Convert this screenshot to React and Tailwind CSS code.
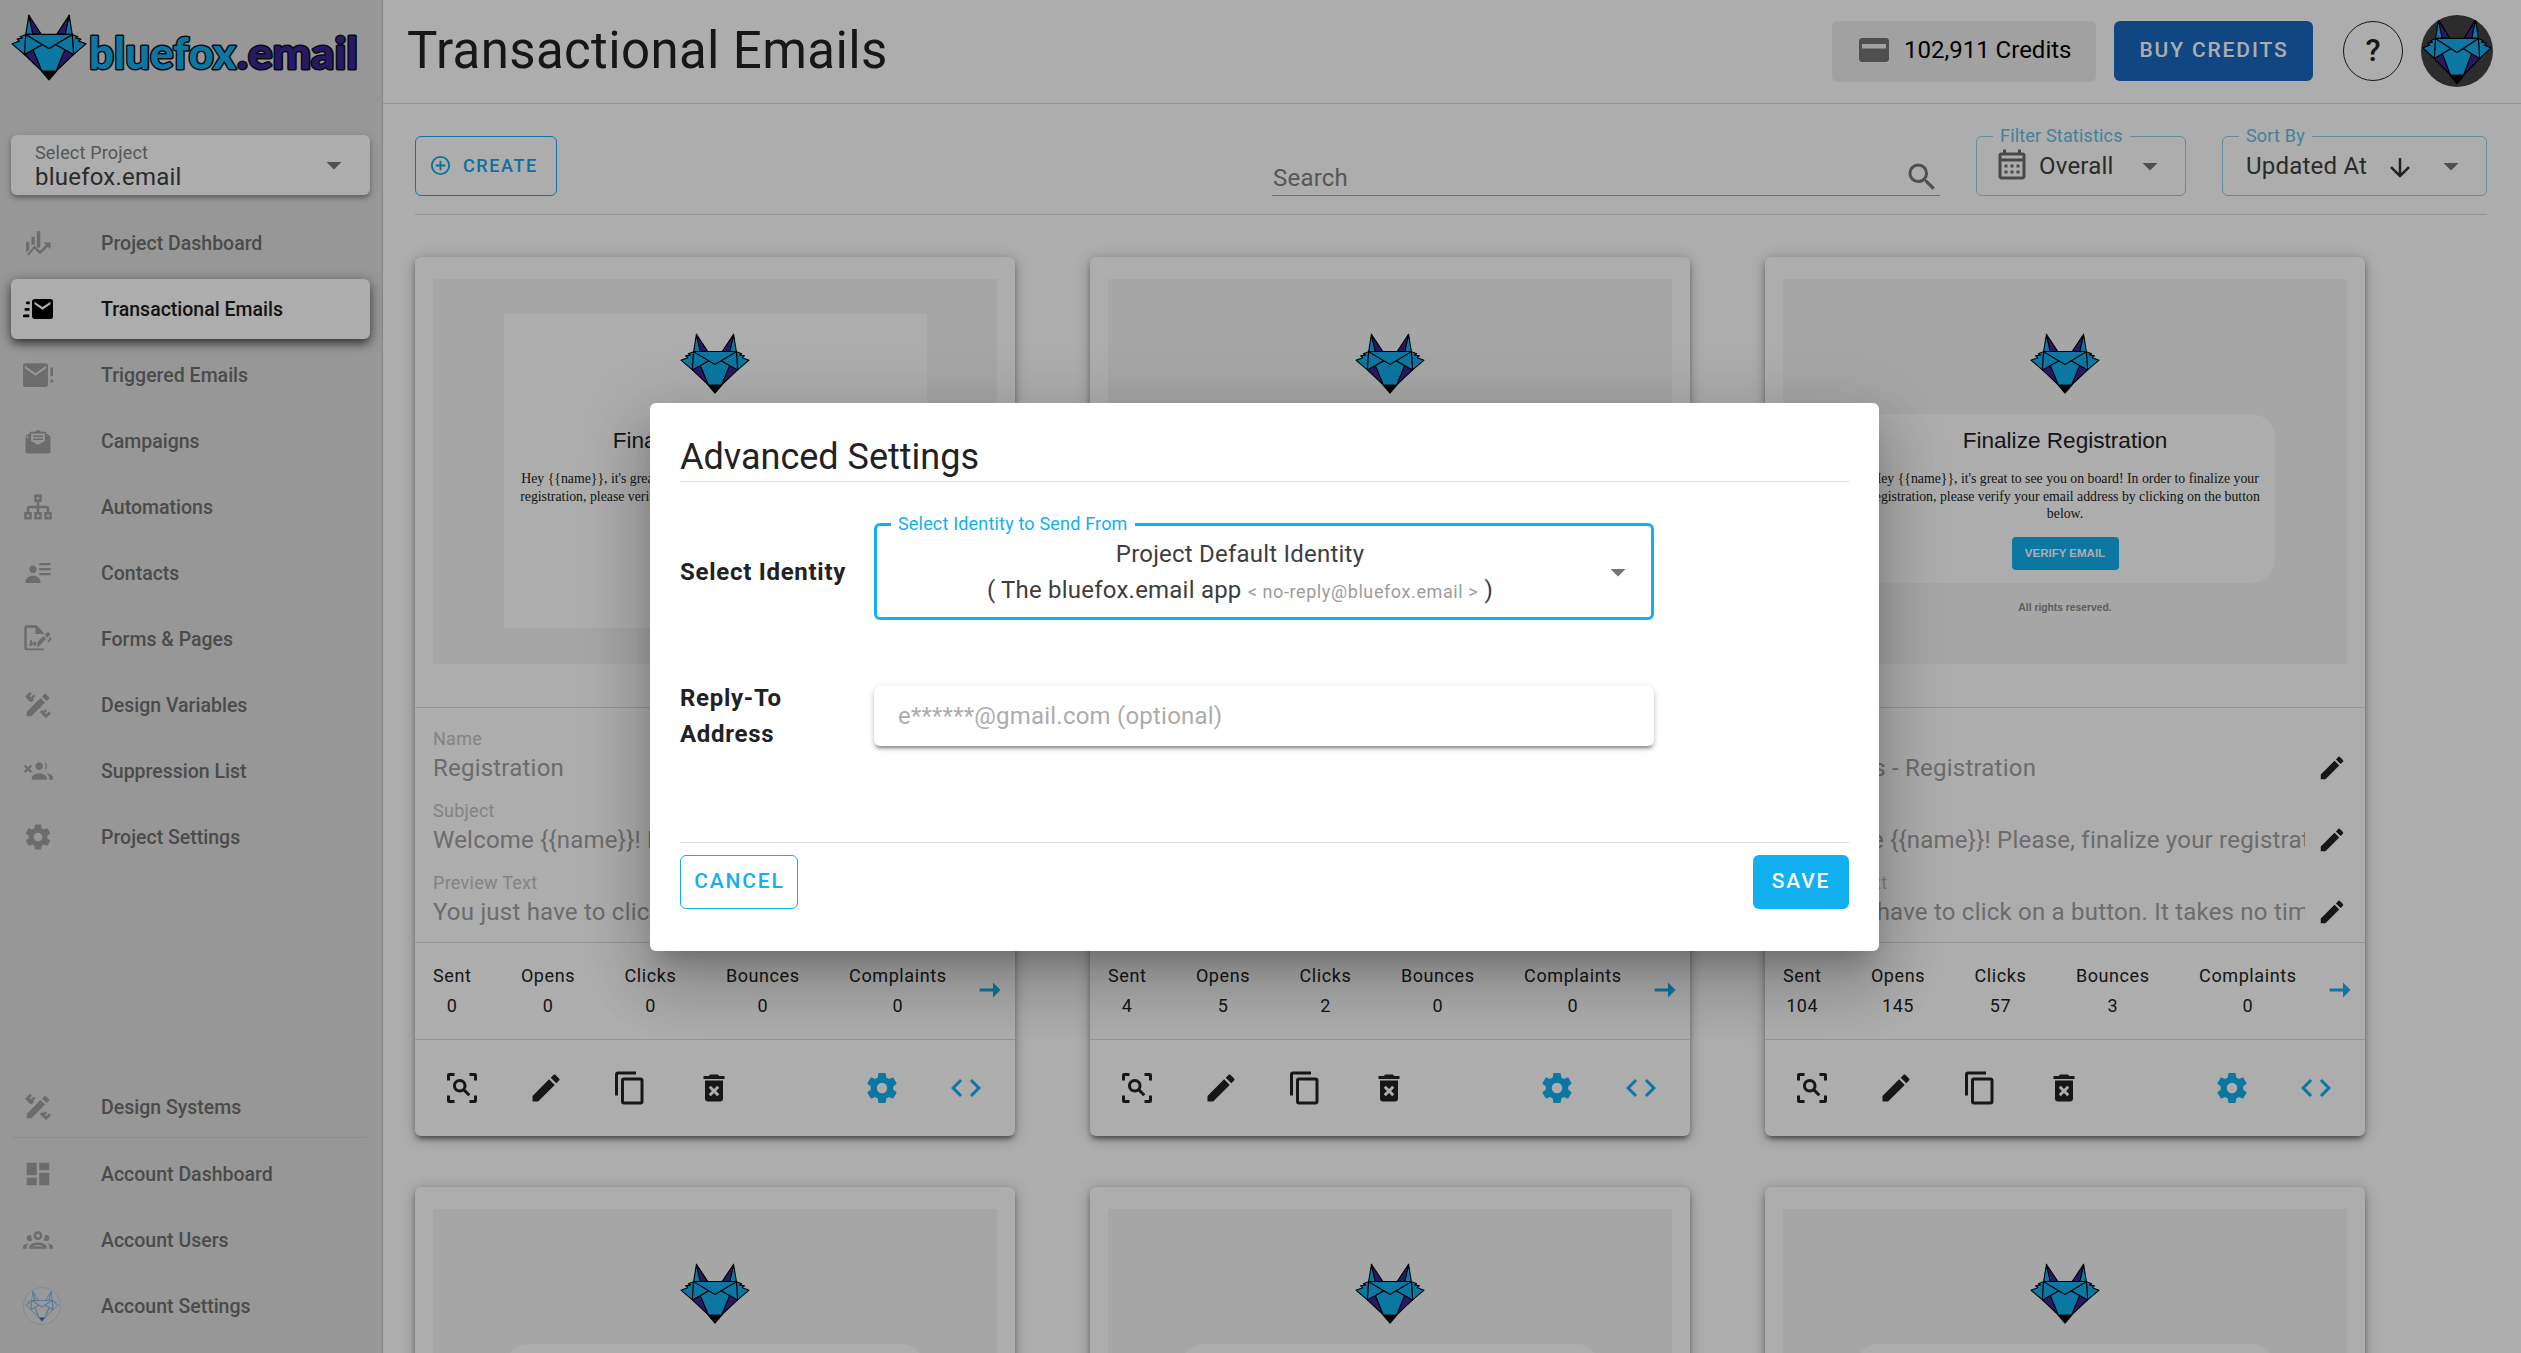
import React from "react";

const P = {
  pencil: "M20.71,7.04C21.1,6.65 21.1,6 20.71,5.63L18.37,3.29C18,2.9 17.35,2.9 16.96,3.29L15.12,5.12L18.87,8.87M3,17.25V21H6.75L17.81,9.93L14.06,6.18L3,17.25Z",
  copy: "M19,21H8V7H19M19,5H8A2,2 0 0,0 6,7V21A2,2 0 0,0 8,23H19A2,2 0 0,0 21,21V7A2,2 0 0,0 19,5M16,1H4A2,2 0 0,0 2,3V17H4V3H16V1Z",
  cog: "M12,15.5A3.5,3.5 0 0,1 8.5,12A3.5,3.5 0 0,1 12,8.5A3.5,3.5 0 0,1 15.5,12A3.5,3.5 0 0,1 12,15.5M19.43,12.97C19.47,12.65 19.5,12.33 19.5,12C19.5,11.67 19.47,11.34 19.43,11L21.54,9.37C21.73,9.22 21.78,8.95 21.66,8.73L19.66,5.27C19.54,5.05 19.27,4.96 19.05,5.05L16.56,6.05C16.04,5.66 15.5,5.32 14.87,5.07L14.5,2.42C14.46,2.18 14.25,2 14,2H10C9.75,2 9.54,2.18 9.5,2.42L9.13,5.07C8.5,5.32 7.96,5.66 7.44,6.05L4.95,5.05C4.73,4.96 4.46,5.05 4.34,5.27L2.34,8.73C2.21,8.95 2.27,9.22 2.46,9.37L4.57,11C4.53,11.34 4.5,11.67 4.5,12C4.5,12.33 4.53,12.65 4.57,12.97L2.46,14.63C2.27,14.78 2.21,15.05 2.34,15.27L4.34,18.73C4.46,18.95 4.73,19.03 4.95,18.95L7.44,17.94C7.96,18.34 8.5,18.68 9.13,18.93L9.5,21.58C9.54,21.82 9.75,22 10,22H14C14.25,22 14.46,21.82 14.5,21.58L14.87,18.93C15.5,18.67 16.04,18.34 16.56,17.94L19.05,18.95C19.27,19.03 19.54,18.95 19.66,18.73L21.66,15.27C21.78,15.05 21.73,14.78 21.54,14.63L19.43,12.97Z",
  code: "M14.6,16.6L19.2,12L14.6,7.4L16,6L22,12L16,18L14.6,16.6M9.4,16.6L4.8,12L9.4,7.4L8,6L2,12L8,18L9.4,16.6Z",
  trash: "M6,19A2,2 0 0,0 8,21H16A2,2 0 0,0 18,19V7H6V19M8.46,11.88L9.87,10.47L12,12.59L14.12,10.47L15.53,11.88L13.41,14L15.53,16.12L14.12,17.53L12,15.41L9.88,17.53L8.47,16.12L10.59,14L8.46,11.88M15.5,4L14.5,3H9.5L8.5,4H5V6H19V4H15.5Z",
  scan: "M17,22V20H20V17H22V20.5A1.5,1.5 0 0,1 20.5,22H17M7,22H3.5A1.5,1.5 0 0,1 2,20.5V17H4V20H7V22M17,2H20.5A1.5,1.5 0 0,1 22,3.5V7H20V4H17V2M7,2V4H4V7H2V3.5A1.5,1.5 0 0,1 3.5,2H7M10.5,6C13,6 15,8 15,10.5C15,11.38 14.75,12.2 14.31,12.9L17.57,16.16L16.16,17.57L12.9,14.31C12.2,14.75 11.38,15 10.5,15C8,15 6,13 6,10.5C6,8 8,6 10.5,6M10.5,8A2.5,2.5 0 0,0 8,10.5A2.5,2.5 0 0,0 10.5,13A2.5,2.5 0 0,0 13,10.5A2.5,2.5 0 0,0 10.5,8Z",
  arrowRight: "M14,16.94V12.94H5.08L5.05,10.93H14V6.94L19,11.94Z",
  arrowDown: "M11,4H13V16L18.5,10.5L19.92,11.92L12,19.84L4.08,11.92L5.5,10.5L11,16V4Z",
  grid: "M13,3V9H21V3M13,21H21V11H13M3,21H11V15H3M3,13H11V3H3V13Z",
  plus: "M12,20C7.59,20 4,16.41 4,12C4,7.59 7.59,4 12,4C16.41,4 20,7.59 20,12C20,16.41 16.41,20 12,20M12,2A10,10 0 0,0 2,12A10,10 0 0,0 12,22A10,10 0 0,0 22,12A10,10 0 0,0 12,2M13,7H11V11H7V13H11V17H13V13H17V11H13V7Z",
  search: "M9.5,3A6.5,6.5 0 0,1 16,9.5C16,11.11 15.41,12.59 14.44,13.73L14.71,14H15.5L20.5,19L19,20.5L14,15.5V14.71L13.73,14.44C12.59,15.41 11.11,16 9.5,16A6.5,6.5 0 0,1 3,9.5A6.5,6.5 0 0,1 9.5,3M9.5,5C7,5 5,7 5,9.5C5,12 7,14 9.5,14C12,14 14,12 14,9.5C14,7 12,5 9.5,5Z",
  card: "M20,4H4C2.89,4 2,4.9 2,6V18C2,19.11 2.9,20 4,20H20C21.11,20 22,19.11 22,18V6C22,4.89 21.11,4 20,4M20,11H4V8H20V11Z",
  calendar: "M7,11H9V13H7V11M21,5V19C21,20.11 20.11,21 19,21H5C3.89,21 3,20.1 3,19V5A2,2 0 0,1 5,3H6V1H8V3H16V1H18V3H19A2,2 0 0,1 21,5M5,7H19V5H5V7M19,19V9H5V19H19M15,13V11H17V13H15M11,13V11H13V13H11M7,15H9V17H7V15M15,17V15H17V17H15M11,17V15H13V17H11Z",
  caret: "M7,10L12,15L17,10H7Z",
  sitemap: "M9,2V8H11V11H5C3.89,11 3,11.89 3,13V16H1V22H7V16H5V13H11V16H9V22H15V16H13V13H19V16H17V22H23V16H21V13C21,11.89 20.11,11 19,11H13V8H15V2H9M11,4H13V6H11V4M3,18H5V20H3V18M11,18H13V20H11V18M19,18H21V20H19V18Z",
  trend: "M2.5,11H5V17.2L2.5,19.8V11M6.8,7H9.4V13.8L8,13L6.8,14.4V7M11,2.5H13.8V15L12.4,16.2L11,15V2.5M16.5,11.5H22V17L20,15L13.6,21L9,16.5L5,21.8H2.8L9,14L13.6,18.2L18.4,13.4L16.5,11.5Z",
  emailFast: "M22,4H9.5C8.3,4 7.2,4.9 7.2,6V18C7.2,19.1 8.3,20 9.5,20H22A2,2 0 0,0 24,18V6C24,4.9 23.1,4 22,4M22,8.2L15.6,12.6L9.2,8.2V6.2L15.6,10.4L22,6.2V8.2M5,16.4V18.6H1C.4,18.6 0,18.1 0,17.5S.4,16.4 1,16.4H5M3.4,6H5.4V8.2H3.4C2.8,8.2 2.4,7.7 2.4,7.1S2.8,6 3.4,6M2.2,11.2H5.2V13.4H2.2C1.6,13.4 1.2,12.9 1.2,12.3S1.6,11.2 2.2,11.2Z",
  emailAlert: "M24,6H22V13H24V6M24,15.5H22V18H24V15.5M20,4.5C20,3.4 19.1,2.5 18,2.5H2C.9,2.5 0,3.4 0,4.5V19.5C0,20.6 .9,21.5 2,21.5H18C19.1,21.5 20,20.6 20,19.5V4.5M18.5,6.5L10,12.5L1.5,6.5V4.5L10,10.5L18.5,4.5V6.5Z",
  newsletter: "M4,8L2,9V20A2,2 0 0,0 4,22H20A2,2 0 0,0 22,20V9C22,8.3 21.6,7.7 21.1,7.3L18.5,5.8V4.5H14.6L12,3L9.4,4.5H5.5V5.8L2.9,7.3C2.4,7.7 2,8.3 2,9L4,10V8M6.5,6H17.5V12L12,15L6.5,12V6M8,7.5V8.7H16V7.5H8M8,10V11.2H16V10H8Z",
  account: "M8,6A3,3 0 1,1 7.9,6M2,20V18.6C2,16.3 4.7,14.2 8,14.2S14,16.3 14,18.6V20H2M13,4H22V5.8H13V4M13,8H22V9.8H13V8M13,12H22V13.8H13V12Z",
  form: "M3,1A2,2 0 0,0 1,3V19A2,2 0 0,0 3,21H17V19.5H3V3H10V8H14.5L16.5,8.2V7L11,1H3M11.5,19L18.5,11.8L16.4,9.6L11.5,14.6V19M19.4,10.9L22,8.2L20,6.2L17.3,8.7L19.4,10.9M21,10L23,12L20.5,14.5L19.5,13.5L21,12V10M5,17.5L6,12.5L7.2,13V15.5L9.4,13.8L10.4,15V17.5H8.8L8.6,16L6.5,17.5H5Z",
  tools: "M3,21V17.3L14,6.3L17.7,10L6.7,21H3M15.2,5.1L17,3.3C17.4,2.9 18,2.9 18.4,3.3L20.7,5.6C21.1,6 21.1,6.6 20.7,7L18.9,8.8L15.2,5.1M1.6,5.4L5.6,1.4L7.1,2.9L5.3,4.7L6.4,5.8L8.6,3.6L10,5L8,7L8.8,7.8L7,9.6L5.8,9.6L1.6,5.4M13.4,17.6L15.2,15.9L16.3,17L17.9,15.4L19.2,16.8L17.6,18.4L18.6,19.4L20.9,17L22.4,18.5L18.4,22.5L13.4,17.6Z",
  usersOff: "M.7,8.2L2,7L4,9L6,7L7.3,8.2L5.3,10.2L7.3,12.2L6,13.5L4,11.5L2,13.5L.7,12.2L2.7,10.2L.7,8.2M13,5A3.1,3.1 0 1,1 12.9,5M7,19V17.5C7,15.5 10,14 13,14S19,15.5 19,17.5V19H7M17,5A3.1,3.1 0 0,1 17,11C18.5,9.5 18.5,6.5 17,5M18.5,14C21.5,14 24,15.5 24,17.5V19H21V17.5C21,16 20,14.8 18.5,14Z",
  users: "M12,5A3.5,3.5 0 0,0 8.5,8.5A3.5,3.5 0 0,0 12,12A3.5,3.5 0 0,0 15.5,8.5A3.5,3.5 0 0,0 12,5M12,7A1.5,1.5 0 0,1 13.5,8.5A1.5,1.5 0 0,1 12,10A1.5,1.5 0 0,1 10.5,8.5A1.5,1.5 0 0,1 12,7M5.5,8A2.5,2.5 0 0,0 3,10.5C3,11.44 3.53,12.25 4.29,12.68C4.65,12.88 5.06,13 5.5,13C5.94,13 6.35,12.88 6.71,12.68C7.08,12.47 7.39,12.17 7.62,11.81C6.89,10.86 6.5,9.7 6.5,8.5C6.5,8.41 6.5,8.31 6.5,8.22C6.2,8.08 5.86,8 5.5,8M18.5,8C18.14,8 17.8,8.08 17.5,8.22C17.5,8.31 17.5,8.41 17.5,8.5C17.5,9.7 17.11,10.86 16.38,11.81C16.5,12 16.63,12.15 16.78,12.3C16.94,12.45 17.1,12.58 17.29,12.68C17.65,12.88 18.06,13 18.5,13C18.94,13 19.35,12.88 19.71,12.68C20.47,12.25 21,11.44 21,10.5A2.5,2.5 0 0,0 18.5,8M12,14C9.66,14 5,15.17 5,17.5V19H19V17.5C19,15.17 14.34,14 12,14M4.71,14.55C2.78,14.78 0,15.76 0,17.5V19H3V17.07C3,16.06 3.69,15.22 4.71,14.55M19.29,14.55C20.31,15.22 21,16.06 21,17.07V19H24V17.5C24,15.76 21.22,14.78 19.29,14.55M12,16C13.53,16 15.24,16.5 16.23,17H7.77C8.76,16.5 10.47,16 12,16Z",
};

const evenOdd = ["sitemap", "newsletter", "emailFast", "emailAlert"];

function Icon({ name, className = "size-9" }) {
  return (
    <svg viewBox="0 0 24 24" className={`shrink-0 ${className}`} fill="currentColor" fillRule={evenOdd.includes(name) ? "evenodd" : "nonzero"}>
      <path d={P[name]} />
    </svg>
  );
}

function Fox({ className, line = false }) {
  const c = line ? "none" : "#12b0ef";
  const p = line ? "none" : "#3b2596";
  return (
    <svg viewBox="34 43 226 200" preserveAspectRatio="none" className={`shrink-0 ${className}`} stroke={line ? "#5aa9dd" : "#000"} strokeWidth={line ? "5" : "3.4"} strokeLinejoin="round">
      <path fill={c} d="M87 47 78 104H101Z" />
      <path fill={p} d="M87 47 99 104H124Z" />
      <path fill={c} d="M207 47 216 104H193Z" />
      <path fill={p} d="M207 47 195 104H170Z" />
      <path fill="#000" stroke="none" d="M87 46 85 62 95 62ZM207 46 209 62 199 62Z" opacity={line ? 0 : 1} />
      <path fill={p} d="M74 164 100 150 126 214ZM220 164 194 150 168 214Z" />
      <path fill={c} d="M100 150 127 134 147 146 167 134 194 150 168 214H126Z" />
      <path fill={c} d="M78 104 61 111 68 115 52 118 59 124 37 132 74 164ZM216 104 233 111 226 115 242 118 235 124 257 132 220 164Z" />
      <path fill={c} d="M78 104 127 134 74 164ZM216 104 167 134 220 164Z" />
      <path fill={c} d="M78 104H216L147 146Z" />
      <path fill={line ? "#3b3fa6" : "#000"} d="M125 214H169L147 240Z" />
    </svg>
  );
}

const top = [
  ["trend", "Project Dashboard"],
  ["emailFast", "Transactional Emails"],
  ["emailAlert", "Triggered Emails"],
  ["newsletter", "Campaigns"],
  ["sitemap", "Automations"],
  ["account", "Contacts"],
  ["form", "Forms & Pages"],
  ["tools", "Design Variables"],
  ["usersOff", "Suppression List"],
  ["cog", "Project Settings"],
];

function NavItem({ icon, label, active }) {
  return (
    <div
      className={`flex h-[60px] items-center rounded-md pl-3 text-[19.5px] font-medium ${
        active ? "bg-white text-[#1c1c1c] shadow-[0_5px_8px_-1px_rgba(0,0,0,.45),0_3px_14px_rgba(0,0,0,.4)]" : "text-[#6f6f6f]"
      }`}
    >
      {icon === "fox" ? (
        <span className="flex size-[38px] items-center justify-center rounded-full border border-[#cacad0] bg-[#e2e2e6]">
          <Fox line className="h-[31px] w-[34px] opacity-80" />
        </span>
      ) : (
        <Icon name={icon} className={active ? "size-[30px] text-black" : "size-[30px] text-[#a0a0a0]"} />
      )}
      <span className={icon === "fox" ? "ml-10 mt-px" : "ml-12 mt-px"}>{label}</span>
    </div>
  );
}

function Sidebar() {
  return (
    <aside className="flex w-[383px] shrink-0 flex-col border-r border-[#c4c4c4] bg-[#dfdfdf] pb-[17px] pl-[11px] pr-3">
      <div className="flex h-[135px] shrink-0 items-start pt-[14px]">
        <Fox className="h-[67px] w-[76px]" />
        <svg className="mt-[14px] h-[48px] w-[275px] shrink-0" viewBox="0 0 275 48" fontFamily="Lato, sans-serif" fontWeight="900" fontSize="43" stroke="#111" strokeWidth="3" paintOrder="stroke" strokeLinejoin="round">
          <text x="2" y="40.5" fill="#12b0ef" textLength="147" lengthAdjust="spacingAndGlyphs">bluefox</text>
          <text x="150" y="40.5" fill="#3b2596" textLength="121" lengthAdjust="spacingAndGlyphs">.email</text>
        </svg>
      </div>
      <div className="flex h-[60px] shrink-0 items-center justify-between rounded-md bg-white pl-6 pr-[18px] shadow-[0_3px_4px_rgba(0,0,0,.25),0_2px_8px_rgba(0,0,0,.15)]">
        <div>
          <div className="mt-[2px] h-[24px] text-[18px] leading-[24px] tracking-[.01em] text-[#808080]">Select Project</div>
          <div className="h-[26px] text-[24px] leading-[25px] tracking-[.009em] text-[#404040]">bluefox.email</div>
        </div>
        <Icon name="caret" className="mb-px size-9 text-[#7a7a7a]" />
      </div>
      <nav className="mt-[18px] flex flex-col gap-1.5">
        {top.map(([i, l]) => (
          <NavItem key={l} icon={i} label={l} active={l === "Transactional Emails"} />
        ))}
      </nav>
      <nav className="mt-auto flex flex-col gap-1.5">
        <div className="rounded-md border-b border-[#cfcfcf]">
          <NavItem icon="tools" label="Design Systems" />
        </div>
        <NavItem icon="grid" label="Account Dashboard" />
        <NavItem icon="users" label="Account Users" />
        <NavItem icon="fox" label="Account Settings" />
      </nav>
    </aside>
  );
}

function Header() {
  return (
    <header className="flex h-[104px] shrink-0 items-center border-b border-[#dcdcdc] pb-px pl-6 pr-7">
      <h1 className="mr-auto text-[51px] leading-[60px] tracking-[.0073em] text-[#222]">Transactional Emails</h1>
      <div className="mr-[18px] flex h-[61px] w-[264px] items-center rounded-md bg-[#ededed] pb-[2px] pl-6 text-black">
        <Icon name="card" className="size-9 text-[#757575]" />
        <span className="ml-3 whitespace-nowrap text-[24px]">102,911 Credits</span>
      </div>
      <div className="mr-[30px] flex h-[60px] w-[199px] items-center justify-center rounded-md bg-[#1867c0] pl-px text-[21px] font-medium tracking-[.089em] text-white">BUY CREDITS</div>
      <div className="mr-[18px] flex size-[60px] items-center justify-center rounded-full border border-[#222] text-[31px] font-medium text-[#222]">?</div>
      <div className="flex size-[72px] items-center justify-center overflow-hidden rounded-full bg-[#424242]">
        <Fox className="h-[67px] w-[70px]" />
      </div>
    </header>
  );
}

function Outlined({ label, className, children }) {
  return (
    <fieldset className={`-mt-[13px] h-[73px] rounded-md border border-[#93cfe6] ${className}`}>
      <legend className="ml-[16px] h-[26px] px-[7px] text-[18px] leading-[26px] tracking-[.01em] text-[#65bfe2]">{label}</legend>
      <div className="-mt-[10px] flex h-[54px] items-center pl-[20px] text-[24px] tracking-[.009em] text-[#404040]">{children}</div>
    </fieldset>
  );
}

function Toolbar() {
  return (
    <div className="mr-[34px] ml-8 flex h-[111px] shrink-0 items-start border-b border-[#dcdcdc] pt-8">
      <div className="mr-auto flex h-[60px] w-[142px] items-center gap-[11px] rounded-md border border-[#12b0ef] pb-[2px] pl-[13px] text-[18px] font-medium tracking-[.089em] text-[#12a9e6]">
        <Icon name="plus" className="size-[23px]" />
        CREATE
      </div>
      <div className="mr-9 flex h-[60px] w-[668px] items-end justify-between border-b border-[#a3a3a3] pl-px text-[24px] tracking-[.009em] text-[#808080]">
        <span className="leading-[34px]">Search</span>
        <Icon name="search" className="size-9 text-[#757575]" />
      </div>
      <Outlined label="Filter Statistics" className="mr-9 w-[210px]">
        <Icon name="calendar" className="-ml-[3px] size-9 text-[#6c6c6c]" />
        <span className="ml-[9px]">Overall</span>
        <Icon name="caret" className="ml-auto mr-[17px] size-9 text-[#757575]" />
      </Outlined>
      <Outlined label="Sort By" className="w-[265px]">
        <span className="ml-[3px]">Updated At</span>
        <Icon name="arrowDown" className="mt-[3px] ml-[18px] size-[30px] text-[#333]" />
        <Icon name="caret" className="ml-auto mr-[17px] size-9 text-[#757575]" />
      </Outlined>
    </div>
  );
}

function Preview({ boxed }) {
  return (
    <div className="mx-auto mt-[22px] h-[385px] w-[564px] bg-[#f5f5f5] pt-[35px]">
      <div className={`mx-auto h-[314px] w-[423px] ${boxed ? "" : "bg-white"}`}>
        <div className="flex h-[100px] justify-center pt-[19px]">
          <Fox className="h-[61px] w-[70px]" />
        </div>
        <div className={`mx-auto w-[420px] pt-[12px] text-center text-[#222] ${boxed ? "h-[169px] rounded-3xl bg-white" : ""}`}>
          <div className="font-['Liberation_Sans'] text-[22.6px] leading-[30px]">Finalize Registration</div>
          <p className="mx-auto mt-[14px] w-[410px] whitespace-pre-line font-['Liberation_Serif'] text-[13.8px] leading-[17.6px]">
            {"Hey {{name}}, it's great to see you on board! In order to finalize your\nregistration, please verify your email address by clicking on the button\nbelow."}
          </p>
          <div className="mx-auto mt-[14px] flex h-[33px] w-[107px] items-center justify-center rounded bg-[#12b0ef] font-['Liberation_Sans'] text-[11.5px] font-bold text-white">VERIFY EMAIL</div>
        </div>
        <div className="mt-[17px] text-center font-['Liberation_Sans'] text-[10.3px] font-bold leading-4 text-[#8a8a8a]">All rights reserved.</div>
      </div>
    </div>
  );
}

function Field({ label, value }) {
  return (
    <div className="h-[72px] text-[#aaa]">
      <div className="h-6 text-[18px] leading-6 tracking-[.015em] text-[#c2c2c2]">{label}</div>
      <div className="flex h-[34px] items-center">
        <div className="w-[522px] overflow-hidden whitespace-nowrap text-[24px] leading-[34px] tracking-[.009em] text-[#a0a0a0]">{value}</div>
        <Icon name="pencil" className="ml-3 size-[30px] text-[#222]" />
      </div>
    </div>
  );
}

const cards = [
  { boxed: false, name: "Registration", stats: [0, 0, 0, 0, 0] },
  { boxed: true, name: "Accounts", stats: [4, 5, 2, 0, 0] },
  { boxed: true, name: "Accounts - Registration", stats: [104, 145, 57, 3, 0] },
  { boxed: true, name: "Reset Password", stats: [0, 0, 0, 0, 0] },
  { boxed: true, name: "Invitation", stats: [0, 0, 0, 0, 0] },
  { boxed: true, name: "Change Email", stats: [0, 0, 0, 0, 0] },
];

function Card({ boxed, name, stats }) {
  return (
    <div className="h-[879px] rounded-md bg-white shadow-[0_5px_5px_-3px_rgba(0,0,0,.38),0_3px_6px_rgba(0,0,0,.25),0_2px_16px_rgba(0,0,0,.2)]">
      <div className="h-[451px] overflow-hidden rounded-t-md border-b border-[#dcdcdc]">
        <Preview boxed={boxed} />
      </div>
      <div className="h-[235px] border-b border-[#dcdcdc] pl-[18px] pt-[19px]">
        <Field label="Name" value={name} />
        <Field label="Subject" value="Welcome {{name}}! Please, finalize your registration" />
        <Field label="Preview Text" value="You just have to click on a button. It takes no time at all" />
      </div>
      <div className="flex h-[97px] justify-between border-b border-[#dcdcdc] pl-[18px] pr-[7px] pt-[18px] text-center text-[18px] leading-[30px] tracking-[.033em] text-[#222]">
        {["Sent", "Opens", "Clicks", "Bounces", "Complaints"].map((s, i) => (
          <div key={s}>
            <div>{s}</div>
            <div>{stats[i]}</div>
          </div>
        ))}
        <Icon name="arrowRight" className="-ml-[24px] mt-[11px] size-9 text-[#12b0ef]" />
      </div>
      <div className="flex h-24 items-center gap-12 pb-px pl-[29px] pr-[31px] text-[#222]">
        <Icon name="scan" />
        <Icon name="pencil" />
        <Icon name="copy" />
        <Icon name="trash" />
        <Icon name="cog" className="ml-auto size-9 text-[#12b0ef]" />
        <Icon name="code" className="size-9 text-[#12b0ef]" />
      </div>
    </div>
  );
}

function Dialog() {
  return (
    <div className="flex h-[548px] w-[1229px] flex-col rounded-md bg-white px-[30px] text-[#222] shadow-[0_17px_23px_-10px_rgba(0,0,0,.2),0_36px_57px_5px_rgba(0,0,0,.14),0_14px_69px_12px_rgba(0,0,0,.12)]">
      <h2 className="h-[79px] shrink-0 border-b border-[#dedede] pt-[31px] text-[36px] leading-[46px]">Advanced Settings</h2>
      <div className="mt-[42px] flex h-[97px] items-start">
        <div className="w-[194px] text-[24px] font-bold leading-[96px] tracking-[.03em]">Select Identity</div>
        <fieldset className="-mt-[11px] h-[107px] w-[780px] rounded-md border-[3px] border-[#12b0ef]">
          <legend className="ml-[14px] h-[24px] px-[7px] text-[18px] leading-[22px] tracking-[.01em] text-[#12b0ef]">Select Identity to Send From</legend>
          <div className="-mt-px flex items-center pl-[21px] text-[24px] leading-9 tracking-[.009em] text-[#3e3e3e]">
            <div className="grow text-center">
              Project Default Identity
              <br />( The bluefox.email app <span className="text-[18px] tracking-[.033em] text-[#9c9c9c]">&lt; no-reply@bluefox.email &gt;</span> )
            </div>
            <Icon name="caret" className="mb-[2px] mr-[15px] ml-[18px] size-9 text-[#757575]" />
          </div>
        </fieldset>
      </div>
      <div className="mt-[59px] flex h-[72px] items-center">
        <div className="w-[194px] pr-10 text-[24px] font-bold leading-9 tracking-[.03em]">Reply-To Address</div>
        <div className="flex h-[60px] w-[780px] items-center rounded-md bg-white pl-6 text-[24px] tracking-[.009em] text-[#acacac] shadow-[0_4px_3px_-2px_rgba(0,0,0,.3),0_3px_4px_rgba(0,0,0,.14),0_1px_8px_rgba(0,0,0,.12)]">
          e******@gmail.com (optional)
        </div>
      </div>
      <div className="mt-auto mb-[42px] flex shrink-0 items-center justify-between border-t border-[#dedede] pt-[12px] text-[21px] font-medium tracking-[.089em]">
        <div className="flex h-[54px] w-[118px] items-center justify-center rounded-md border border-[#12b0ef] pl-px pt-px text-[#12b0ef]">CANCEL</div>
        <div className="flex h-[54px] w-24 items-center justify-center rounded-md bg-[#12b0ef] pt-px text-white">SAVE</div>
      </div>
    </div>
  );
}

export default function App() {
  return (
    <div className="relative flex h-[1353px] w-[2521px] overflow-hidden bg-white font-['Roboto',sans-serif]">
      <Sidebar />
      <main className="flex min-w-0 flex-1 flex-col overflow-hidden bg-white">
        <Header />
        <Toolbar />
        <div className="ml-8 mt-[42px] grid grid-cols-[600px_600px_600px] gap-x-[75px] gap-y-[51px]">
          {cards.map((c) => (
            <Card key={c.name} {...c} />
          ))}
        </div>
      </main>
      <div className="absolute inset-0 flex items-center justify-center bg-black/32 pl-[8px]">
        <Dialog />
      </div>
    </div>
  );
}
